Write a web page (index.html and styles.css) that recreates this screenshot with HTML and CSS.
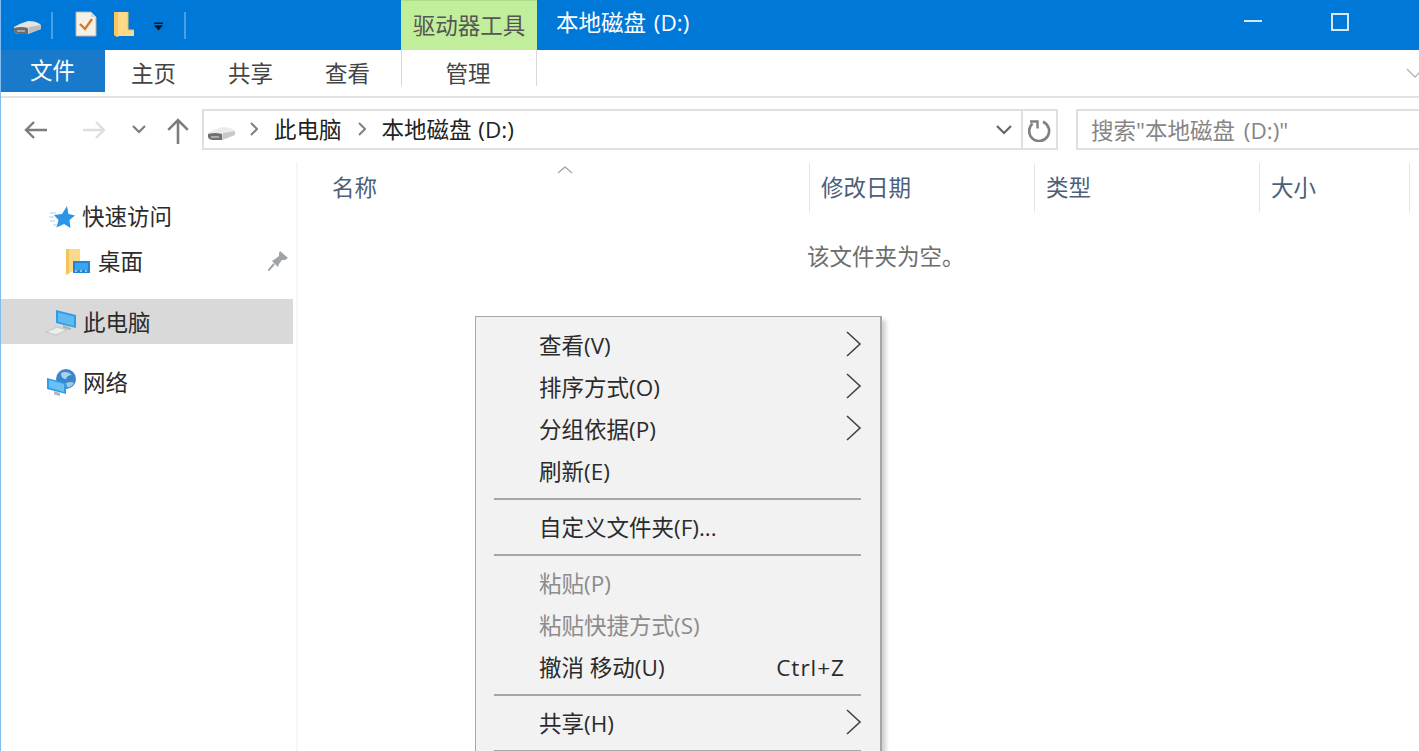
FILE: index.html
```html
<!DOCTYPE html>
<html lang="zh-CN">
<head>
<meta charset="utf-8">
<title>本地磁盘 (D:)</title>
<link rel="stylesheet" href="styles.css">
</head>
<body>
<div class="window">
  <header class="titlebar">
    <div class="qat">
      <svg class="ic-drive" viewBox="0 0 29 15"><path d="M1 7Q8 3 15 1Q24 1 28 5V9Q20 12 15 14H6Q2 14 1 11Z" fill="#e4e4e4"/><path d="M16 7Q23 6 28 5V9Q20 12 15 14Z" fill="#bdbdbd"/><path d="M1 8Q8 6 15 8V14H6Q2 14 1 11Z" fill="#6c6c6c"/><path d="M4 10H12V12H4Z" fill="#a5a5a5"/></svg>
      <span class="qat-sep"></span>
      <svg class="ic-props" viewBox="0 0 22 26"><path d="M1 1H16L21 6V25H1Z" fill="#f6f1e6" stroke="#b9b4aa"/><path d="M16 1L21 6H16Z" fill="#d4d4d4"/><path d="M5 13L10 18L17 8" fill="none" stroke="#d9772b" stroke-width="2.4"/></svg>
      <svg class="ic-folder" viewBox="0 0 20 26"><path d="M0 1H14V19H20V25H5L3 26L0 24Z" fill="#fdd98a"/><path d="M14 1V19H20" fill="none" stroke="#edc067"/><path d="M0 1H4V25L0 24Z" fill="#f8c85f"/></svg>
      <svg class="ic-qdrop" viewBox="0 0 10 10"><path d="M0 0H10V1.5H0Z" fill="#111"/><path d="M0 3H10L5 9Z" fill="#111"/></svg>
      <span class="qat-sep qat-sep-last"></span>
    </div>
    <div class="ctx-tab">驱动器工具</div>
    <div class="title">本地磁盘 (D:)</div>
    <div class="winbtns">
      <span class="btn-min"></span>
      <span class="btn-max"></span>
    </div>
  </header>

  <nav class="tabs">
    <div class="tab-file">文件</div>
    <div class="tab">主页</div>
    <div class="tab">共享</div>
    <div class="tab">查看</div>
    <div class="tab-manage">管理</div>
    <svg class="ribbon-toggle" viewBox="0 0 18 10"><path d="M1 1L9 9L17 1" fill="none" stroke="#b5b5b5" stroke-width="1.4"/></svg>
  </nav>

  <div class="toolbar">
    <div class="navbtns">
      <svg class="nav-back" viewBox="0 0 24 18"><path d="M23 9H2M10 1L2 9L10 17" fill="none" stroke="#7c7c7c" stroke-width="2.4"/></svg>
      <svg class="nav-forward" viewBox="0 0 24 18"><path d="M1 9H22M14 1L22 9L14 17" fill="none" stroke="#dedede" stroke-width="2.4"/></svg>
      <svg class="nav-recent" viewBox="0 0 14 9"><path d="M1 1L7 7L13 1" fill="none" stroke="#7c7c7c" stroke-width="2.2"/></svg>
      <svg class="nav-up" viewBox="0 0 20 24"><path d="M10 24V2M1 11L10 2L19 11" fill="none" stroke="#7c7c7c" stroke-width="2.4"/></svg>
    </div>
    <div class="addr">
      <svg class="addr-drive" viewBox="0 0 29 15"><path d="M1 7Q8 3 15 1Q24 1 28 5V9Q20 12 15 14H6Q2 14 1 11Z" fill="#ececec"/><path d="M16 7Q23 6 28 5V9Q20 12 15 14Z" fill="#c8c8c8"/><path d="M1 8Q8 6 15 8V14H6Q2 14 1 11Z" fill="#707070"/><path d="M4 10H12V12H4Z" fill="#ababab"/></svg>
      <svg class="crumb-arrow" viewBox="0 0 8 14"><path d="M1 1L7 7L1 13" fill="none" stroke="#808080" stroke-width="2"/></svg>
      <span class="crumb">此电脑</span>
      <svg class="crumb-arrow" viewBox="0 0 8 14"><path d="M1 1L7 7L1 13" fill="none" stroke="#808080" stroke-width="2"/></svg>
      <span class="crumb">本地磁盘 (D:)</span>
      <svg class="addr-drop" viewBox="0 0 16 10"><path d="M1 1L8 8L15 1" fill="none" stroke="#666" stroke-width="2.2"/></svg>
      <span class="addr-refresh">
        <svg viewBox="0 0 24 24"><path d="M4.5 5.5A10 10 0 1 0 15 3.8" fill="none" stroke="#808080" stroke-width="2.6"/><path d="M2 3.5H9.5V10.5" fill="none" stroke="#808080" stroke-width="2.4"/></svg>
      </span>
    </div>
    <div class="search">搜索"本地磁盘 (D:)"</div>
  </div>

  <div class="body">
    <aside class="sidebar">
      <div class="side-row side-quick">
        <svg class="side-ic" viewBox="0 0 26 24"><path d="M18 1L19.5 9L26 10.5L20.5 15L21.5 23L15 19L7.5 22.5L9.5 15L5 10L13 9Z" fill="#2b95e8"/><path d="M1 8H7M0 12H5M1 16H6M4 20H8" stroke="#9ed0f5" stroke-width="1"/></svg>
        <span>快速访问</span>
      </div>
      <div class="side-row side-desktop">
        <svg class="side-ic-sub" viewBox="0 0 26 26"><path d="M1 0H15V12H8V22L1 26Z" fill="#fcd98a"/><path d="M1 0H4V24L1 26Z" fill="#f3c35b"/><rect x="8" y="12" width="17" height="12" fill="#1f87d9"/><rect x="10" y="14" width="13" height="7" fill="#3ba4ee"/><path d="M10 22H23" stroke="#fff" stroke-dasharray="2 3"/></svg>
        <span>桌面</span>
        <svg class="pin" viewBox="0 0 20 20"><path d="M12 0L20 7L17 9L14 9L11 13L10 16L4 10L7 8L11 5L11 2Z" fill="#a0a3a8"/><path d="M6 13L0 20" stroke="#a0a3a8" stroke-width="2"/></svg>
      </div>
      <div class="side-row side-pc">
        <svg class="side-ic-pc" viewBox="0 0 30 28"><path d="M10 1L30 6V19L10 14Z" fill="#2f9de8"/><path d="M12 3.5L28 7.5V17L12 12.5Z" fill="#5fbaf1"/><path d="M17 16L25 19V21L17 19Z" fill="#b0b0b0"/><path d="M0 23L11 18L21 21L10 26Z" fill="#ececec" stroke="#c4c4c4"/></svg>
        <span>此电脑</span>
      </div>
      <div class="side-row side-net">
        <svg class="side-ic-net" viewBox="0 0 30 28"><circle cx="20" cy="10" r="10" fill="#3b86c9"/><path d="M15 4Q21 1 26 6Q21 6 20 10Q15 10 15 4Z" fill="#a8d2ef"/><path d="M20 14Q26 12 28 14Q25 19 21 18Z" fill="#9ecaea"/><path d="M1 9L20 14V25L1 20Z" fill="#2f9de8"/><path d="M3 11L18 15V23L3 18.5Z" fill="#6cc0f2"/><path d="M8 22L14 24V27L8 25.5Z" fill="#b5b5b5"/></svg>
        <span>网络</span>
      </div>
    </aside>

    <main class="content">
      <div class="sort-mark"><svg viewBox="0 0 16 8"><path d="M1 7L8 1L15 7" fill="none" stroke="#a8a8a8" stroke-width="1.4"/></svg></div>
      <div class="cols">
        <div class="col col-name">名称</div>
        <div class="col col-date">修改日期</div>
        <div class="col col-type">类型</div>
        <div class="col col-size">大小</div>
      </div>
      <div class="empty">该文件夹为空。</div>
    </main>
  </div>

  <div class="menu">
    <div class="mi"><span>查看(V)</span><svg class="sub" viewBox="0 0 16 26"><path d="M1 1L14 13L1 25" fill="none" stroke="#444" stroke-width="1.6"/></svg></div>
    <div class="mi"><span>排序方式(O)</span><svg class="sub" viewBox="0 0 16 26"><path d="M1 1L14 13L1 25" fill="none" stroke="#444" stroke-width="1.6"/></svg></div>
    <div class="mi"><span>分组依据(P)</span><svg class="sub" viewBox="0 0 16 26"><path d="M1 1L14 13L1 25" fill="none" stroke="#444" stroke-width="1.6"/></svg></div>
    <div class="mi"><span>刷新(E)</span></div>
    <div class="msep"></div>
    <div class="mi"><span>自定义文件夹(F)...</span></div>
    <div class="msep"></div>
    <div class="mi mi-off"><span>粘贴(P)</span></div>
    <div class="mi mi-off"><span>粘贴快捷方式(S)</span></div>
    <div class="mi"><span>撤消 移动(U)</span><span class="shortcut">Ctrl+Z</span></div>
    <div class="msep"></div>
    <div class="mi"><span>共享(H)</span><svg class="sub" viewBox="0 0 16 26"><path d="M1 1L14 13L1 25" fill="none" stroke="#444" stroke-width="1.6"/></svg></div>
    <div class="msep"></div>
  </div>
</div>
</body>
</html>
```
FILE: styles.css
```css
* { box-sizing: border-box; }
html, body { margin: 0; height: 100%; overflow: hidden; background: #fff; }
body { font-family: "Open Sans", "Noto Sans CJK SC", sans-serif; font-size: 22.5px; color: #222; }
.window { position: relative; width: 1419px; height: 751px; overflow: hidden; border-left: 1px solid #7fbdf0; }
svg { display: block; flex: none; }

.titlebar { display: flex; height: 50px; margin-left: -1px; background: #0078d7; color: #fff; }
.qat { display: flex; align-items: center; width: 401px; flex: none; padding: 0 0 0 13px; }
.ic-drive { width: 29px; height: 15px; margin-top: 4px; }
.qat-sep { width: 2px; height: 27px; background: #4a9ee4; margin-left: 9px; }
.ic-props { width: 22px; height: 26px; margin-left: 22px; margin-top: -3px; }
.ic-folder { width: 20px; height: 26px; margin-left: 17px; margin-top: -2px; }
.ic-qdrop { width: 9px; height: 10px; margin-left: 20px; margin-top: 3px; }
.qat-sep-last { margin-left: 21px; }
.ctx-tab { width: 136px; flex: none; background: #c0ee9b; color: #555; text-align: center; line-height: 50px; border-top: 1px solid #a9de87; }
.title { margin-left: 19px; line-height: 46px; flex: 1; word-spacing: 2px; }
.winbtns { display: flex; align-items: flex-start; }
.btn-min { width: 18px; height: 2px; background: #d5e8f8; margin: 20px 69px 0 0; }
.btn-max { width: 18px; height: 18px; border: 2px solid #d5e8f8; margin: 13px 70px 0 0; }

.tabs { display: flex; height: 48px; margin-left: -1px; border-bottom: 2px solid #e4e4e4; position: relative; }
.tab-file { width: 105px; height: 42px; background: #1979ca; color: #fff; text-align: center; line-height: 42px; }
.tab { width: 97px; height: 42px; text-align: center; line-height: 48px; color: #444; }
.tab-manage { width: 136px; height: 36px; margin-left: 5px; padding-right: 2px; text-align: center; line-height: 48px; color: #444; border-left: 1px solid #d9d9d9; border-right: 1px solid #d9d9d9; }
.ribbon-toggle { width: 18px; height: 10px; position: absolute; right: -5px; top: 18px; }

.toolbar { display: flex; align-items: flex-start; height: 64px; padding-top: 11px; }
.navbtns { display: flex; align-items: center; width: 201px; height: 41px; flex: none; padding-left: 23px; }
.nav-back { width: 24px; height: 18px; }
.nav-forward { width: 24px; height: 18px; margin-left: 34px; }
.nav-recent { width: 14px; height: 9px; margin-left: 26px; }
.nav-up { width: 22px; height: 26px; margin-left: 21px; margin-top: 2px; }
.addr { display: flex; align-items: center; width: 856px; height: 41px; border: 2px solid #e0e0e0; flex: none; }
.addr-drive { width: 29px; height: 15px; margin: 8px 0 0 3px; }
.crumb-arrow { width: 8px; height: 14px; margin: -2px 16px 0 16px; }
.crumb { line-height: 36px; word-spacing: 1px; }
.addr-drive + .crumb-arrow { margin-left: 14px; }
.addr-drop { width: 16px; height: 10px; margin-left: auto; margin-right: 9px; }
.addr-refresh { width: 35px; height: 37px; border-left: 2px solid #e0e0e0; display: flex; align-items: center; justify-content: center; }
.addr-refresh svg { width: 24px; height: 24px; }
.search { margin-left: 18px; flex: 1; height: 41px; border: 2px solid #e0e0e0; border-right: 0; padding-left: 13px; line-height: 39px; color: #858585; word-spacing: 3px; }

.body { display: flex; height: 589px; }
.sidebar { width: 297px; flex: none; border-right: 2px solid #f7f7f7; padding-top: 32px; }
.side-row { display: flex; align-items: center; height: 45px; position: relative; margin-right: 3px; color: #2b2b2b; line-height: 41px; }
.side-quick { padding-left: 48px; }
.side-ic { width: 26px; height: 24px; margin-right: 7px; }
.side-desktop { padding-left: 64px; }
.side-ic-sub { width: 26px; height: 26px; margin-right: 7px; }
.pin { width: 20px; height: 20px; position: absolute; right: 5px; top: 12px; }
.side-pc { background: #d9d9d9; margin-top: 15px; padding-left: 45px; padding-top: 2px; }
.side-ic-pc { width: 30px; height: 28px; margin-right: 7px; }
.side-net { margin-top: 15px; padding-left: 45px; padding-top: 2px; }
.side-ic-net { width: 30px; height: 28px; margin-right: 7px; }

.content { flex: 1; position: relative; }
.sort-mark { position: absolute; left: 259px; top: 4px; }
.sort-mark svg { width: 16px; height: 8px; }
.cols { display: flex; height: 49px; margin-top: 1px; color: #4c607a; }
.col { line-height: 50px; padding-left: 11px; border-right: 1px solid #e5e5e5; height: 49px; }
.col-name { width: 512px; padding-left: 34px; }
.col-date { width: 225px; }
.col-type { width: 225px; }
.col-size { width: 150px; }
.empty { color: #6d6d6d; line-height: 30px; margin-top: 30px; padding-left: 509px; }

.menu { position: absolute; left: 474px; top: 316px; width: 407px; height: 470px; background: #f2f2f2; border: solid #a6a6a6; border-width: 1px 2px 1px 1px; padding: 6px 19px 0 18px; box-shadow: 4px 4px 4px rgba(0,0,0,.18); }
.mi { display: flex; align-items: center; justify-content: space-between; height: 42px; padding-left: 45px; padding-top: 4px; color: #2b2b2b; line-height: 38px; }
.mi-off { color: #8c8c8c; }
.sub { width: 16px; height: 26px; margin-top: -5px; margin-right: -1px; }
.shortcut { margin-right: 16px; letter-spacing: 1px; }
.msep { height: 2px; background: #a6a6a6; margin: 7px 0 5px; }
```
